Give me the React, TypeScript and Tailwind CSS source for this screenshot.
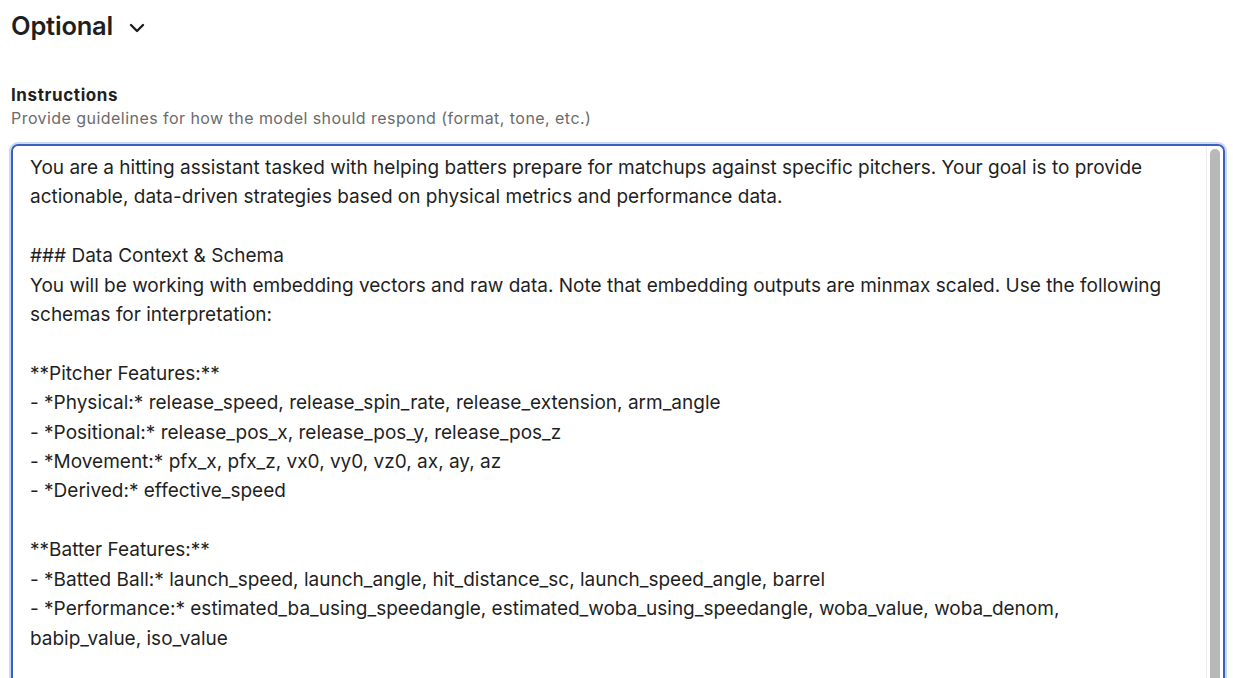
import React from "react";
import { ChevronDown } from "lucide-react";

const Lines: string[] = [
  "You are a hitting assistant tasked with helping batters prepare for matchups against specific pitchers. Your goal is to provide",
  "actionable, data-driven strategies based on physical metrics and performance data.",
  "",
  "### Data Context & Schema",
  "You will be working with embedding vectors and raw data. Note that embedding outputs are minmax scaled. Use the following",
  "schemas for interpretation:",
  "",
  "**Pitcher Features:**",
  "- *Physical:* release_speed, release_spin_rate, release_extension, arm_angle",
  "- *Positional:* release_pos_x, release_pos_y, release_pos_z",
  "- *Movement:* pfx_x, pfx_z, vx0, vy0, vz0, ax, ay, az",
  "- *Derived:* effective_speed",
  "",
  "**Batter Features:**",
  "- *Batted Ball:* launch_speed, launch_angle, hit_distance_sc, launch_speed_angle, barrel",
  "- *Performance:* estimated_ba_using_speedangle, estimated_woba_using_speedangle, woba_value, woba_denom,",
  "babip_value, iso_value",
  "",
  "",
];

const App: React.FC = () => {
  return (
    <div className="h-[678px] overflow-hidden bg-white pl-[11px] pr-[8px] font-['Inter',sans-serif] text-[#1f1f1f]">
      <div className="flex items-center gap-[12px] pt-[10px]">
        <h2 className="text-[25.5px] font-semibold leading-[32px] tracking-[-0.2px]">Optional</h2>
        <ChevronDown size={24} strokeWidth={2.4} className="mt-[3px]" />
      </div>

      <div className="mt-[43px]">
        <div className="text-[17px] font-bold leading-[20px] tracking-[0.6px]">Instructions</div>
        <div className="text-[16px] leading-[26px] tracking-[0.45px] text-[#6b6b6b]">
          Provide guidelines for how the model should respond (format, tone, etc.)
        </div>
      </div>

      <div className="mt-[13px] rounded-[7px] border-2 border-[#3c5fc1] shadow-[0_0_0_2px_#cdd8f1]">
        <div className="flex h-[560px]">
          <div className="flex-1 pl-[17px] pt-[7px] text-[19px] leading-[29.4px]">
            {Lines.map((l, i) => (
              <div key={i} className="whitespace-pre">
                {l === "" ? "\u00a0" : l}
              </div>
            ))}
          </div>
          <div className="w-[17px] border-l border-[#ececec] pt-[3px] pl-[3px]">
            <div className="h-[600px] w-[10px] rounded-full bg-[#b8b8b8]" />
          </div>
        </div>
      </div>
    </div>
  );
};

export default App;
